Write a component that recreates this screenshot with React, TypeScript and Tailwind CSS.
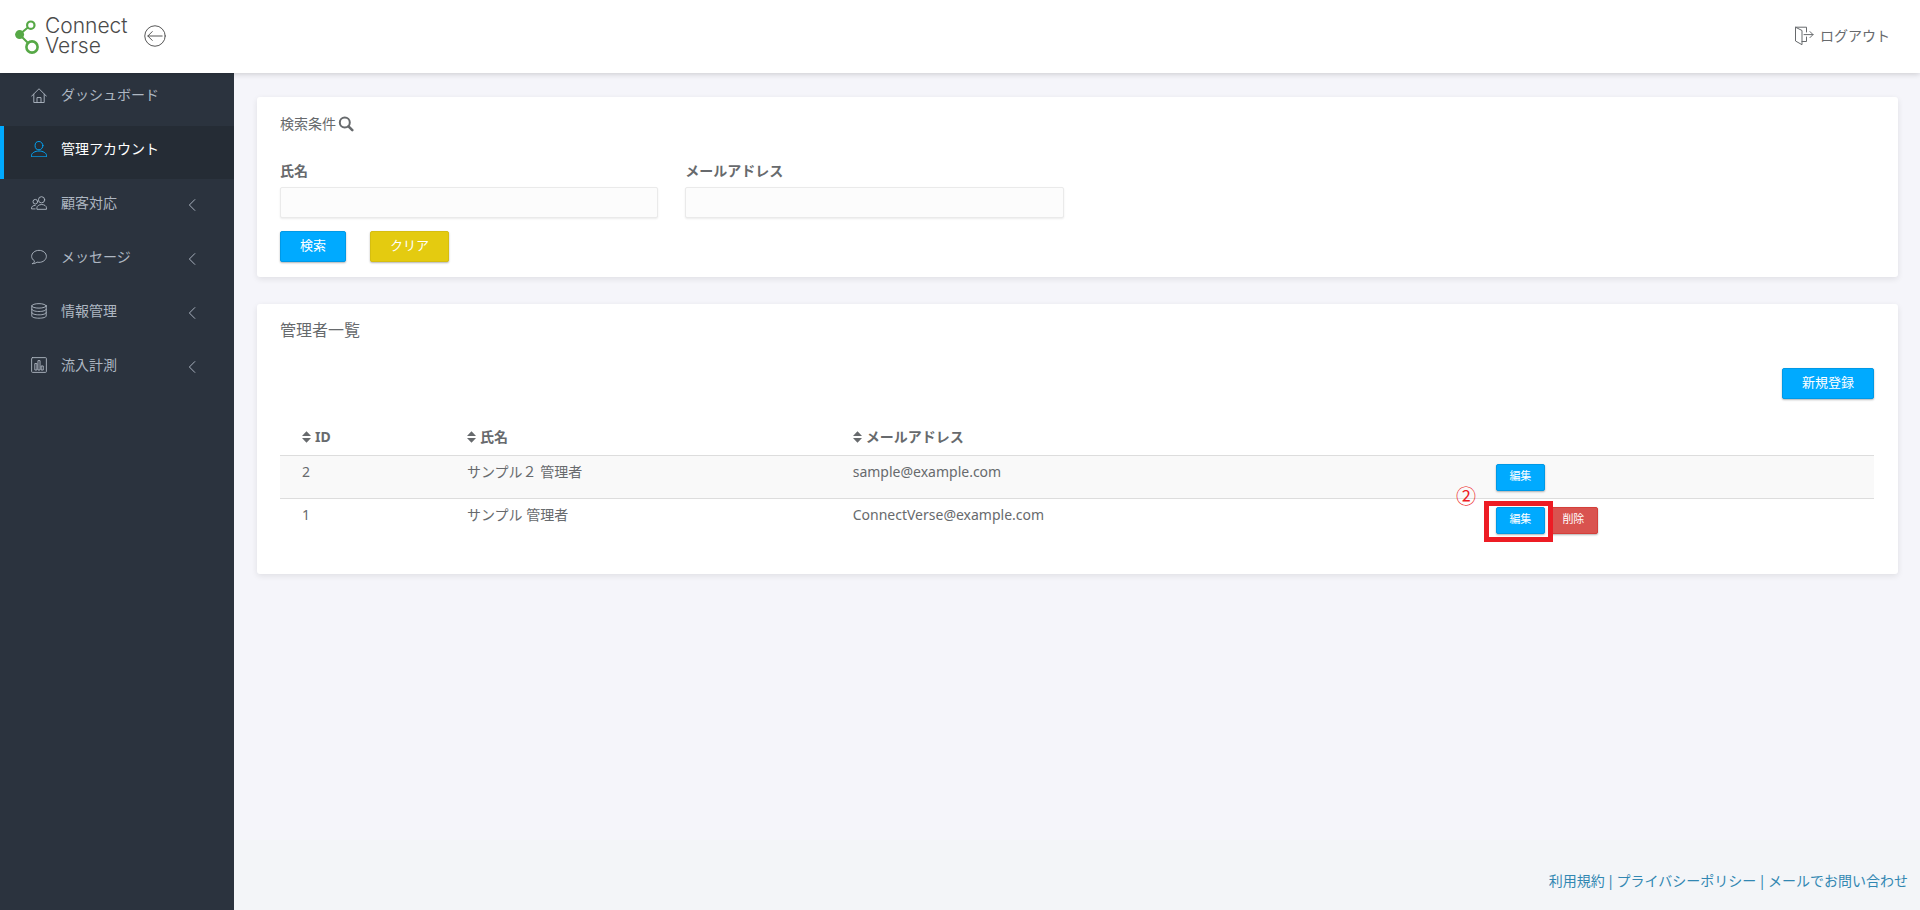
import React from "react";

type IconProps = { className?: string; children: React.ReactNode };

function LineIcon({ className = "size-4", children }: IconProps) {
  return (
    <svg
      viewBox="0 0 20 20"
      className={className}
      fill="none"
      stroke="currentColor"
      strokeWidth="1.15"
      strokeLinecap="round"
      strokeLinejoin="round"
      aria-hidden="true"
    >
      {children}
    </svg>
  );
}

const icons = {
  home: (
    <>
      <path d="M.7 11.5 10 2.2l9.3 9.3" />
      <path d="M3.5 9v10.4h13V9" />
      <path d="M7.5 19.4v-6.2h5v6.2" />
    </>
  ),
  user: (
    <>
      <ellipse cx="10" cy="5.8" rx="4.9" ry="5.2" />
      <path d="M.7 19.3v-1.6c0-2.5 4.2-5.2 9.3-5.2s9.3 2.7 9.3 5.2v1.6z" />
    </>
  ),
  users: (
    <>
      <circle cx="13.2" cy="6" r="3.9" />
      <path d="M7.4 17.4v-1.5c0-2 2.4-4 5.9-4s6 2 6 4v1.5z" />
      <circle cx="5.4" cy="8.4" r="2.9" />
      <path d="M5.2 17.4H.7v-1.2c0-1.7 1.8-3.2 4.6-3.3" />
    </>
  ),
  bubble: (
    <path d="M2 18.3c1.5-.7 2.300-2.100 2.300-3.500C2.100 13.500.8 11.400.8 9.200.8 5 4.900 1.700 10 1.700s9.200 3.300 9.200 7.500-4.100 7.500-9.200 7.500c-.9 0-1.700-.1-2.500-.3-1.400 1.200-3.300 1.900-5.500 1.900z" />
  ),
  database: (
    <>
      <ellipse cx="10" cy="3.600" rx="9" ry="2.800" />
      <path d="M1 3.600v12.600C1 17.800 5 19 10 19s9-1.200 9-2.800V3.600" />
      <path d="M1 7.800c0 1.600 4 2.800 9 2.800s9-1.200 9-2.800M1 12c0 1.600 4 2.800 9 2.800s9-1.200 9-2.800" />
    </>
  ),
  chart: (
    <>
      <rect x=".8" y=".8" width="18.400" height="18.400" rx="1" />
      <path d="M4.800 15.800V8.200h2.600v7.600zM8.700 15.800V4.500h2.600v11.300zM12.700 15.800v-4.600h2.600v4.600z" />
    </>
  ),
};

type NavItem = {
  label: string;
  icon: keyof typeof icons;
  active?: boolean;
  nested?: boolean;
};

const navItems: NavItem[] = [
  { label: "ダッシュボード", icon: "home" },
  { label: "管理アカウント", icon: "user", active: true },
  { label: "顧客対応", icon: "users", nested: true },
  { label: "メッセージ", icon: "bubble", nested: true },
  { label: "情報管理", icon: "database", nested: true },
  { label: "流入計測", icon: "chart", nested: true },
];

function Logo() {
  return (
    <a href="#" className="flex items-center gap-1.5" aria-label="Connect Verse">
      <svg viewBox="0 0 24 36" className="h-9 w-6" fill="none" stroke="#56a846" aria-hidden="true">
        <path d="M4.500 16.500 14 8.500M4.500 16.500l9 9" strokeWidth="2" />
        <circle cx="4.600" cy="16.600" r="4.500" fill="#56a846" stroke="none" />
        <circle cx="15.800" cy="7.200" r="3.700" strokeWidth="2.200" fill="#fff" />
        <circle cx="17" cy="29" r="5.600" strokeWidth="2.600" fill="#fff" />
      </svg>
      <span className="flex flex-col font-['Inter','Liberation_Sans',sans-serif] text-[21px] leading-5 font-light text-[#4a4a4a]">
        <span>Connect</span>
        <span>Verse</span>
      </span>
    </a>
  );
}

function Header() {
  return (
    <header className="relative z-10 flex h-[73px] shrink-0 items-center justify-between bg-white pr-[30px] pb-px pl-[15px] shadow-[0_1px_6px_rgba(0,0,0,0.18)]">
      <div className="flex items-center gap-4">
        <Logo />
        <button type="button" aria-label="メニューを閉じる" className="text-[#555]">
          <LineIcon className="size-[22px]">
            <circle cx="10" cy="10" r="9.300" strokeWidth="0.900" />
            <path d="M16.500 10h-13M7.500 6l-4 4 4 4" strokeWidth="0.900" />
          </LineIcon>
        </button>
      </div>
      <a href="#" className="flex items-center gap-1.5">
        <LineIcon className="size-5">
          <path d="M12.500 6V1.200H1.500v13.800l6.500 3.700V4.500L1.500 1.200M8 15.500h4.500V11" strokeWidth="1" />
          <path d="M10 8.600h9M16 5.600l3 3-3 3" strokeWidth="1" />
        </LineIcon>
        <span>ログアウト</span>
      </a>
    </header>
  );
}

function Sidebar() {
  return (
    <nav className="-mt-px w-[234px] shrink-0 bg-[#2b333e]">
      <ul className="flex flex-col gap-px">
        {navItems.map((item) => (
          <li key={item.label}>
            <a
              href="#"
              className={
                item.active
                  ? "flex h-[53px] items-center border-l-4 border-[#00aaff] bg-[#252c35] pr-[35px] pb-2 pl-[27px] text-white"
                  : "flex h-[53px] items-center border-l-4 border-transparent pr-[35px] pb-2 pl-[27px] text-[#aeb7c2]"
              }
            >
              <span className={item.active ? "text-[#00aaff]" : ""}>
                <LineIcon>{icons[item.icon]}</LineIcon>
              </span>
              <span className="ml-3.5 grow">{item.label}</span>
              {item.nested && (
                <LineIcon className="mt-1 size-3">
                  <path d="M13 1 4 10l9 9" strokeWidth="1.600" />
                </LineIcon>
              )}
            </a>
          </li>
        ))}
      </ul>
    </nav>
  );
}

const cardClass = "rounded-[3px] bg-white pr-6 pl-[23px] shadow-[0_2px_6px_rgba(0,0,0,0.09)]";
const inputClass =
  "mt-1 block h-[31px] w-full rounded-[2px] border border-[#eaeaea] bg-[#fcfcfc] px-3 shadow-[0_1px_2px_rgba(0,0,0,0.08)] outline-none";
const buttonClass =
  "h-[31px] rounded-[2px] border px-[19px] pb-1 text-[13px] leading-5 text-white shadow-[0_1px_2px_rgba(0,0,0,0.3)]";
const smallButtonClass =
  "h-[27px] w-[49px] rounded-[2px] border pb-1 text-[11px] leading-4 text-white shadow-[0_1px_2px_rgba(0,0,0,0.3)]";

function SearchPanel() {
  return (
    <form className={`${cardClass} pt-[15px] pb-[15px]`} onSubmit={(e) => e.preventDefault()}>
      <h2 className="flex items-center gap-0.5">
        検索条件
        <svg viewBox="0 0 16 16" className="size-4" fill="none" stroke="currentColor" aria-hidden="true">
          <circle cx="6.800" cy="6.600" r="5" strokeWidth="2" />
          <path d="m10.500 10.300 3.800 3.800" strokeWidth="2.600" strokeLinecap="round" />
        </svg>
      </h2>
      <div className="mt-[23px] grid grid-cols-4 gap-[27px]">
        <div>
          <label htmlFor="name" className="block font-bold">
            氏名
          </label>
          <input id="name" type="text" className={inputClass} />
        </div>
        <div>
          <label htmlFor="email" className="block font-bold">
            メールアドレス
          </label>
          <input id="email" type="text" className={inputClass} />
        </div>
      </div>
      <div className="mt-[13px] flex gap-6">
        <button type="submit" className={`${buttonClass} border-[#0099e6] bg-[#00aaff]`}>
          検索
        </button>
        <button type="reset" className={`${buttonClass} border-[#d6be10] bg-[#e4cb10]`}>
          クリア
        </button>
      </div>
    </form>
  );
}

function SortHeading({ label }: { label: string }) {
  return (
    <button type="button" className="flex items-center gap-1 font-bold">
      <svg viewBox="0 0 9 12" className="h-3 w-[9px]" fill="currentColor" aria-hidden="true">
        <path d="M4.500.2 9 5H0zM4.500 11.800 9 7H0z" />
      </svg>
      {label}
    </button>
  );
}

const admins = [
  { id: 2, name: "サンプル２ 管理者", email: "sample@example.com", marked: false },
  { id: 1, name: "サンプル 管理者", email: "ConnectVerse@example.com", marked: true },
];

function AdminTable() {
  return (
    <section className={`${cardClass} pt-3.5 pb-8`}>
      <h2 className="text-[16px]">管理者一覧</h2>
      <div className="mt-[26px] flex justify-end">
        <button type="button" className={`${buttonClass} border-[#0099e6] bg-[#00aaff]`}>
          新規登録
        </button>
      </div>
      <table className="mt-5 w-full table-fixed border-collapse text-left">
        <thead>
          <tr className="border-b border-[#dddddd]">
            <th className="w-[10.35%] py-1.5 pl-[22px]">
              <SortHeading label="ID" />
            </th>
            <th className="w-[24.2%] py-1.5 pl-[22px]">
              <SortHeading label="氏名" />
            </th>
            <th className="w-[40.35%] py-1.5 pl-[22px]">
              <SortHeading label="メールアドレス" />
            </th>
            <th aria-label="操作" />
          </tr>
        </thead>
        <tbody>
          {admins.map((admin) => (
            <tr
              key={admin.id}
              className="h-[43px] border-[#dddddd] align-top odd:border-b odd:bg-[#f9f9f9]"
            >
              <td className="pt-1 pl-[22px]">{admin.id}</td>
              <td className="pt-1 pl-[22px]">{admin.name}</td>
              <td className="pt-1 pl-[22px]">{admin.email}</td>
              <td className="pt-2 pl-[22px]">
                <div className="flex gap-1">
                  <div className="relative flex">
                    <button type="button" className={`${smallButtonClass} border-[#0099e6] bg-[#00aaff]`}>
                      編集
                    </button>
                    {admin.marked && (
                      <>
                        <span className="pointer-events-none absolute -top-1.5 -right-2 -bottom-2 -left-3 z-10 border-[5px] border-[#ed1c24]" />
                        <span className="absolute -top-5 -left-10 text-[20px] leading-5 text-[#ed1c24]">
                          ②
                        </span>
                      </>
                    )}
                  </div>
                  {admin.marked && (
                    <button type="button" className={`${smallButtonClass} border-[#d43f3a] bg-[#d9534f]`}>
                      削除
                    </button>
                  )}
                </div>
              </td>
            </tr>
          ))}
        </tbody>
      </table>
    </section>
  );
}

export default function App() {
  return (
    <div className="flex min-h-screen flex-col bg-[#f5f5fa] font-['Noto_Sans','Noto_Sans_CJK_JP',sans-serif] text-[14px] leading-6 font-normal text-[#676a6d]">
      <Header />
      <div className="flex grow">
        <Sidebar />
        <div className="flex min-w-0 grow flex-col">
          <main className="flex grow flex-col gap-[27px] pt-6 pr-[22px] pl-[23px]">
            <SearchPanel />
            <AdminTable />
          </main>
          <footer className="flex h-[70px] items-center justify-end gap-0.5 bg-[#f3f5f8] pt-3 pr-3 text-[#3287b2]">
            <a href="#">利用規約</a>
            <span>|</span>
            <a href="#">プライバシーポリシー</a>
            <span>|</span>
            <a href="#">メールでお問い合わせ</a>
          </footer>
        </div>
      </div>
    </div>
  );
}
